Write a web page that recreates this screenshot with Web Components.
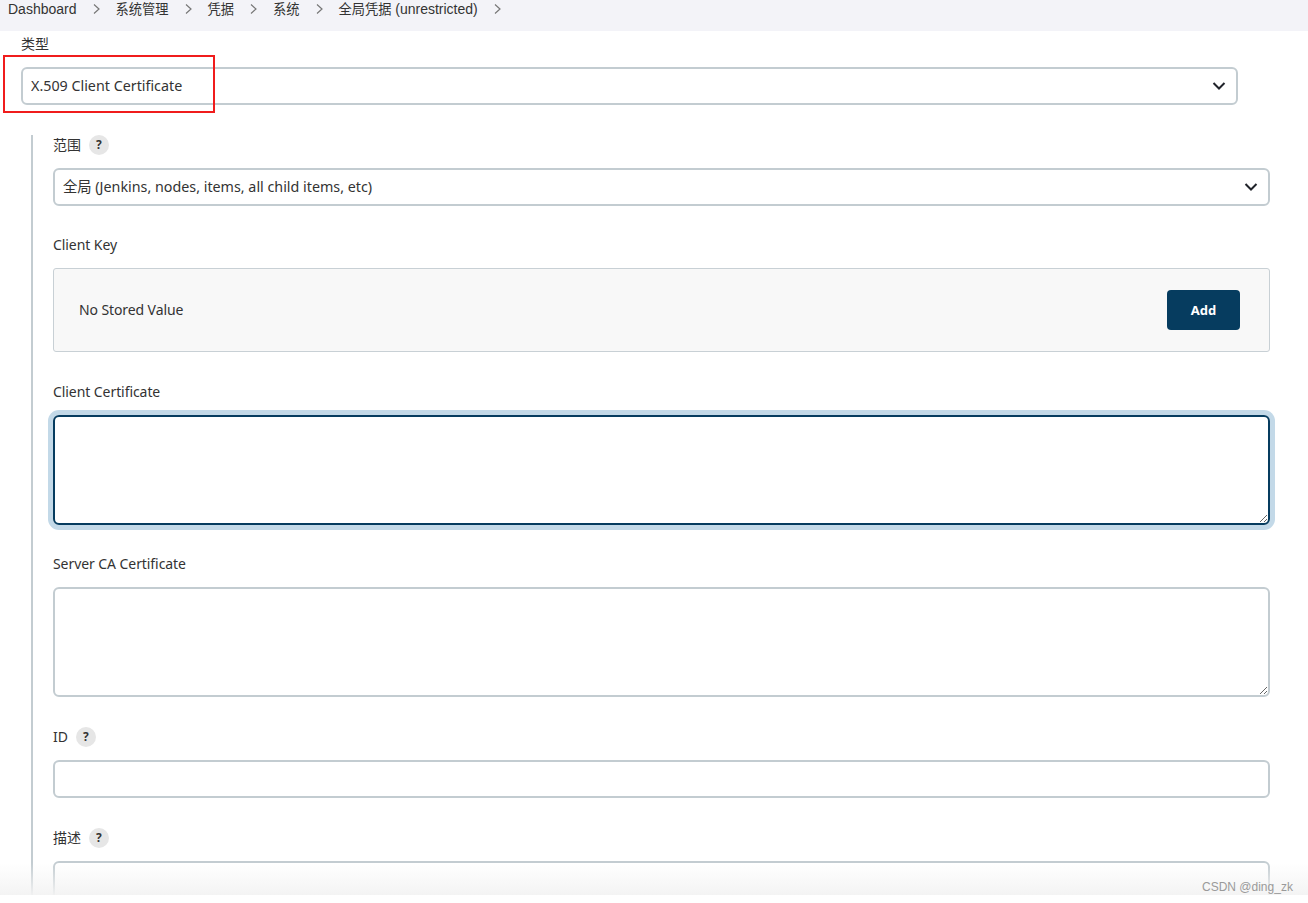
<!DOCTYPE html>
<html lang="zh">
<head>
<meta charset="utf-8">
<title>Jenkins credentials</title>
<style>
  html, body { margin: 0; background: #fff; }
  body {
    font-family: "Noto Sans", "Noto Sans CJK SC", sans-serif;
    font-size: 14px;
    color: #333;
  }
</style>
</head>
<body>
<jk-page>
  <jk-breadcrumbs>
    <jk-crumb>Dashboard</jk-crumb>
    <jk-crumb><jk-cjk>系统管理</jk-cjk></jk-crumb>
    <jk-crumb><jk-cjk>凭据</jk-cjk></jk-crumb>
    <jk-crumb><jk-cjk>系统</jk-cjk></jk-crumb>
    <jk-crumb><jk-cjk>全局凭据</jk-cjk> (unrestricted)</jk-crumb>
  </jk-breadcrumbs>

  <jk-form>
    <jk-field label="类型" style="--control-end: 32px">
      <jk-select value="X.509 Client Certificate"></jk-select>
    </jk-field>

    <jk-nested>
      <jk-field label="范围" help style="--after: 29px">
        <jk-select value="全局 (Jenkins, nodes, items, all child items, etc)"></jk-select>
      </jk-field>
      <jk-field label="Client Key">
        <jk-secret>
          No Stored Value
          <jk-button slot="action">Add</jk-button>
        </jk-secret>
      </jk-field>
      <jk-field label="Client Certificate" style="--after: 29px">
        <jk-textarea focused></jk-textarea>
      </jk-field>
      <jk-field label="Server CA Certificate">
        <jk-textarea></jk-textarea>
      </jk-field>
      <jk-field label="ID" help>
        <jk-input></jk-input>
      </jk-field>
      <jk-field label="描述" help>
        <jk-textarea></jk-textarea>
      </jk-field>
    </jk-nested>
  </jk-form>
</jk-page>

<script>
class JkPage extends HTMLElement {
  connectedCallback() {
    this.attachShadow({ mode: 'open' });
    this.shadowRoot.innerHTML = `
      <style>
        :host {
          display: block;
          position: relative;
          height: 895px;
          overflow: hidden;
        }
        .fade {
          position: absolute;
          left: 0;
          right: 0;
          bottom: 0;
          height: 32px;
          background: linear-gradient(rgba(243,243,243,0), rgba(243,243,243,.95));
        }
        .marker {
          position: absolute;
          left: 3px;
          top: 55px;
          width: 208px;
          height: 54px;
          border: 2px solid #f01c1c;
        }
        .watermark {
          position: absolute;
          left: 1202px;
          top: 879px;
          font: 12px/16px "Liberation Sans", sans-serif;
          color: #9a9a9a;
        }
      </style>
      <slot></slot>
      <div class="fade"></div>
      <div class="marker"></div>
      <div class="watermark">CSDN @ding_zk</div>
    `;
  }
}

class JkBreadcrumbs extends HTMLElement {
  connectedCallback() {
    this.attachShadow({ mode: 'open' });
    this.shadowRoot.innerHTML = `
      <style>
        :host {
          display: flex;
          align-items: flex-start;
          gap: 15px;
          height: 31px;
          padding-left: 8px;
          box-sizing: border-box;
          background: #f3f3f8;
          font-family: "Liberation Sans", "Noto Sans CJK SC", sans-serif;
        }
      </style>
      <slot></slot>
    `;
  }
}

class JkCrumb extends HTMLElement {
  connectedCallback() {
    this.attachShadow({ mode: 'open' });
    this.shadowRoot.innerHTML = `
      <style>
        :host {
          display: flex;
          align-items: center;
          flex: none;
          gap: 15px;
          height: 18px;
          line-height: 18px;
          color: #333;
        }
        svg { width: 9px; height: 12px; fill: none; stroke: #777; stroke-width: 1.2; }
      </style>
      <span><slot></slot></span>
      <svg viewBox="0 0 9 12"><path d="M2 1.5 7 6 2 10.5"/></svg>
    `;
  }
}

class JkCjk extends HTMLElement {
  connectedCallback() {
    this.attachShadow({ mode: 'open' });
    this.shadowRoot.innerHTML = `
      <style>
        :host { font-size: 13.25px; }
      </style>
      <slot></slot>
    `;
  }
}

class JkForm extends HTMLElement {
  connectedCallback() {
    this.attachShadow({ mode: 'open' });
    this.shadowRoot.innerHTML = `
      <style>
        :host {
          display: block;
          padding: 3px 38px 0 21px;
        }
      </style>
      <slot></slot>
    `;
  }
}

class JkNested extends HTMLElement {
  connectedCallback() {
    this.attachShadow({ mode: 'open' });
    this.shadowRoot.innerHTML = `
      <style>
        :host {
          display: block;
          margin-left: 10px;
          padding-left: 20px;
          border-left: 2px solid #c3ccd1;
        }
      </style>
      <slot></slot>
    `;
  }
}

class JkField extends HTMLElement {
  connectedCallback() {
    this.attachShadow({ mode: 'open' });
    const help = this.hasAttribute('help') ? '<jk-help></jk-help>' : '';
    this.shadowRoot.innerHTML = `
      <style>
        :host {
          display: block;
          margin-bottom: var(--after, 30px);
        }
        .label {
          display: flex;
          align-items: center;
          gap: 8px;
          height: 20px;
          line-height: 20px;
          margin-bottom: 13px;
          letter-spacing: -.07px;
          color: #333;
        }
        .control { margin-right: var(--control-end, 0); letter-spacing: 0; }
      </style>
      <div class="label"><span>${this.getAttribute('label')}</span>${help}</div>
      <div class="control"><slot></slot></div>
    `;
  }
}

class JkHelp extends HTMLElement {
  connectedCallback() {
    this.attachShadow({ mode: 'open' });
    this.shadowRoot.innerHTML = `
      <style>
        :host {
          display: flex;
          align-items: center;
          justify-content: center;
          width: 20px;
          height: 20px;
          border-radius: 50%;
          background: #e6e6e6;
          color: #333;
          font-size: 12px;
          font-weight: 700;
        }
      </style>
      ?
    `;
  }
}

class JkSelect extends HTMLElement {
  connectedCallback() {
    this.attachShadow({ mode: 'open' });
    this.shadowRoot.innerHTML = `
      <style>
        :host {
          display: block;
          position: relative;
          height: 38px;
        }
        select {
          display: block;
          width: 100%;
          height: 100%;
          padding: 0 40px 2px 8px;
          appearance: none;
          background: #fff;
          border: 2px solid #c3ccd1;
          border-radius: 6px;
          font: inherit;
          font-size: 14.3px;
          color: #333;
          outline: none;
        }
        svg {
          position: absolute;
          right: 12px;
          top: 13px;
          width: 14px;
          height: 12px;
          fill: none;
          stroke: #20232a;
          stroke-width: 2;
        }
      </style>
      <select><option></option></select>
      <svg viewBox="0 0 14 12"><path d="M1.5 3 7 8.5 12.5 3"/></svg>
    `;
    this.shadowRoot.querySelector('option').textContent = this.getAttribute('value');
  }
}

class JkInput extends HTMLElement {
  connectedCallback() {
    this.attachShadow({ mode: 'open' });
    this.shadowRoot.innerHTML = `
      <style>
        :host { display: block; height: 38px; }
        input {
          display: block;
          width: 100%;
          height: 100%;
          padding: 0 8px;
          box-sizing: border-box;
          border: 2px solid #c3ccd1;
          border-radius: 6px;
          background: #fff;
          font: inherit;
          outline: none;
        }
      </style>
      <input type="text">
    `;
  }
}

class JkTextarea extends HTMLElement {
  connectedCallback() {
    this.attachShadow({ mode: 'open' });
    this.shadowRoot.innerHTML = `
      <style>
        :host { display: block; height: 110px; }
        textarea {
          display: block;
          width: 100%;
          height: 110px;
          padding: 8px;
          box-sizing: border-box;
          border: 2px solid #c3ccd1;
          border-radius: 6px;
          background: transparent;
          font: inherit;
          outline: none;
          resize: vertical;
        }
        :host([focused]) textarea {
          border-color: #063c5f;
          box-shadow: 0 0 0 5px #c3d9e8;
        }
      </style>
      <textarea></textarea>
    `;
  }
}

class JkSecret extends HTMLElement {
  connectedCallback() {
    this.attachShadow({ mode: 'open' });
    this.shadowRoot.innerHTML = `
      <style>
        :host {
          display: flex;
          align-items: center;
          justify-content: space-between;
          height: 84px;
          padding: 0 29px 0 25px;
          box-sizing: border-box;
          border: 1px solid #c8d0d5;
          border-radius: 3px;
          background: #f8f8f8;
          color: #333;
          letter-spacing: -.1px;
        }
        span { padding-bottom: 2px; }
      </style>
      <span><slot></slot></span>
      <slot name="action"></slot>
    `;
  }
}

class JkButton extends HTMLElement {
  connectedCallback() {
    this.attachShadow({ mode: 'open' });
    this.shadowRoot.innerHTML = `
      <style>
        :host {
          display: flex;
          align-items: center;
          justify-content: center;
          width: 73px;
          height: 40px;
          border-radius: 4px;
          background: #063c5f;
          color: #fff;
          font-size: 13px;
          font-weight: 700;
          letter-spacing: 0;
        }
      </style>
      <slot></slot>
    `;
  }
}

customElements.define('jk-page', JkPage);
customElements.define('jk-breadcrumbs', JkBreadcrumbs);
customElements.define('jk-crumb', JkCrumb);
customElements.define('jk-cjk', JkCjk);
customElements.define('jk-form', JkForm);
customElements.define('jk-nested', JkNested);
customElements.define('jk-field', JkField);
customElements.define('jk-help', JkHelp);
customElements.define('jk-select', JkSelect);
customElements.define('jk-input', JkInput);
customElements.define('jk-textarea', JkTextarea);
customElements.define('jk-secret', JkSecret);
customElements.define('jk-button', JkButton);
</script>
</body>
</html>
